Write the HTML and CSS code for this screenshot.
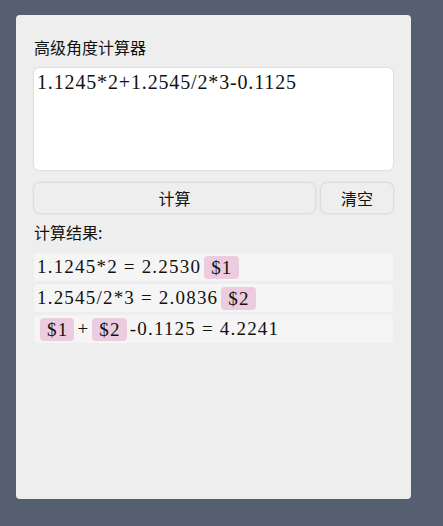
FILE: index.html
```html
<!DOCTYPE html>
<html lang="zh-CN">
<head>
    <meta charset="UTF-8">
    <meta name="viewport" content="width=device-width, initial-scale=1.0">
    <title>高级角度计算器</title>
    <link rel="stylesheet" href="styles.css">
</head>
<body>
    <div class="container">
        <h1>高级角度计算器</h1>

        <textarea id="expr" spellcheck="false">1.1245*2+1.2545/2*3-0.1125</textarea>

        <div class="btn-row">
            <button id="calcBtn" class="btn-calc">计算</button>
            <button id="clearBtn" class="btn-clear">清空</button>
        </div>

        <div class="result-title">计算结果:</div>

        <div id="result" class="result">
            <div class="row">1.1245*2 = 2.2530<span class="tag">$1</span></div>
            <div class="row">1.2545/2*3 = 2.0836<span class="tag">$2</span></div>
            <div class="row"><span class="tag">$1</span>+<span class="tag">$2</span>-0.1125 = 4.2241</div>
        </div>
    </div>
</body>
</html>
```
FILE: styles.css
```css
body {
    margin: 0;
    padding: 15px 32px 27px 16px;
    background-color: #555f6f;
    font-family: "Liberation Serif", "Noto Sans CJK SC", serif;
}
.container {
    background: #eeeeee;
    border-radius: 4px;
    padding: 20px 18px 18px 18px;
    height: 484px;
    box-sizing: border-box;
}
h1 {
    margin: 0 0 9px 0;
    font-family: "Noto Sans CJK SC", sans-serif;
    font-size: 16px;
    font-weight: normal;
    line-height: 24px;
    color: #111;
}
textarea {
    display: block;
    width: 100%;
    height: 102px;
    box-sizing: border-box;
    border: none;
    border-radius: 5px;
    padding: 1px 3px;
    font-family: "Liberation Serif", "Noto Sans CJK SC", serif;
    font-size: 20px;
    letter-spacing: 0.85px;
    line-height: 26px;
    color: #111;
    background: #fff;
    box-shadow: 0 0 2px rgba(0,0,0,0.2);
    resize: none;
    outline: none;
}
.btn-row {
    display: flex;
    gap: 6px;
    margin-top: 13px;
}
button {
    height: 30px;
    border: none;
    border-radius: 6px;
    background: #eeeeee;
    box-shadow: 0 0 3px rgba(0,0,0,0.2);
    font-family: "Noto Sans CJK SC", sans-serif;
    font-size: 16px;
    color: #111;
    cursor: pointer;
}
.btn-calc {
    flex: 1;
}
.btn-clear {
    width: 72px;
}
.result-title {
    margin-top: 7px;
    font-family: "Noto Sans CJK SC", sans-serif;
    font-size: 16px;
    line-height: 24px;
    color: #111;
}
.result {
    margin-top: 9px;
    display: flex;
    flex-direction: column;
    gap: 3px;
}
.row {
    display: flex;
    align-items: center;
    height: 28px;
    padding: 0 3px;
    background: #f5f5f5;
    border-radius: 4px;
    font-size: 19px;
    letter-spacing: 1.2px;
    color: #111;
    white-space: pre;
}
.tag {
    display: inline-block;
    margin: 0 3px;
    padding: 0 6px 0 7px;
    line-height: 23px;
    background: #ecccde;
    border-radius: 4px;
}
```
